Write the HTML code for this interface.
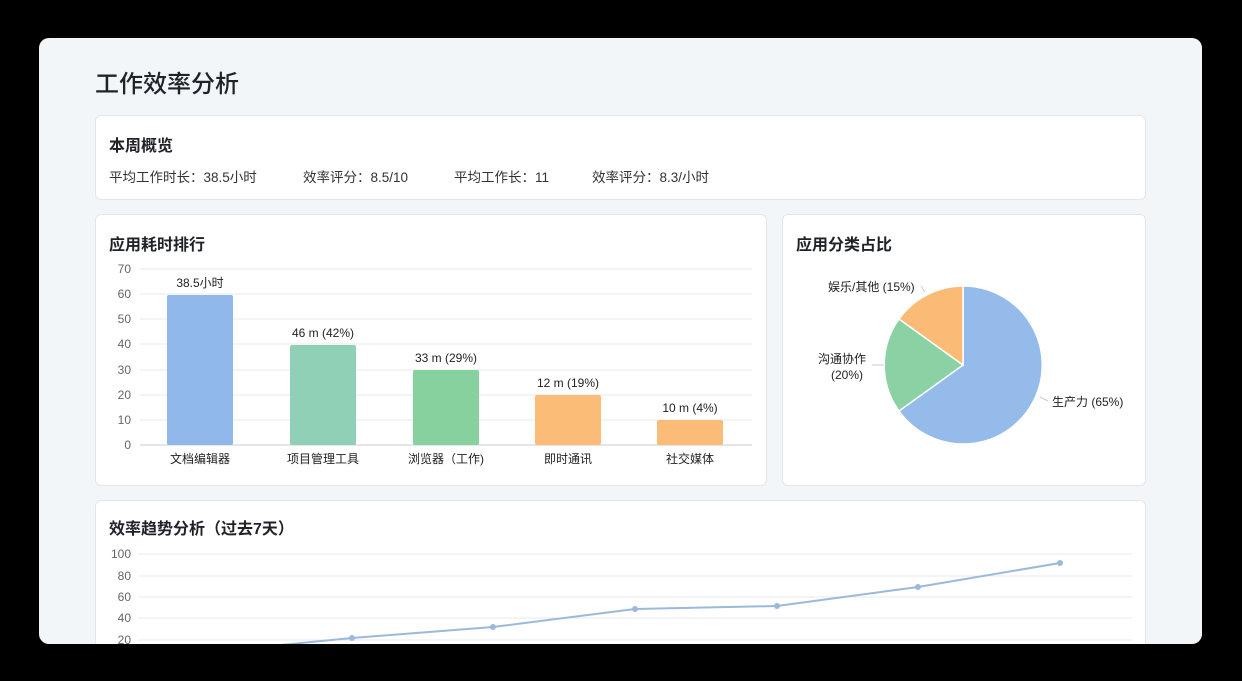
<!DOCTYPE html>
<html><head><meta charset="utf-8"><style>
body{margin:0;width:1242px;height:681px;background:#000;overflow:hidden;font-family:"Liberation Sans","Noto Sans CJK SC",sans-serif;color:#222}
.panel{position:absolute;left:39px;top:38px;width:1163px;height:606px;background:#f3f6f8;border-radius:10px;overflow:hidden}
.card{position:absolute;background:#fff;border:1px solid #e3e7eb;border-radius:6px;box-sizing:border-box}
h1{position:absolute;left:56px;top:26px;margin:0;font-size:24px;font-weight:500;color:#1f2328}
.t{position:absolute;font-size:16px;font-weight:600;color:#1f2328}
.s{position:absolute;font-size:13.5px;top:50px;color:#333}
</style></head><body>
<div class="panel">
<h1>工作效率分析</h1>
<div class="card" style="left:56px;top:77px;width:1051px;height:85px">
<div class="t" style="left:13px;top:16px">本周概览</div>
<div class="s" style="left:13px">平均工作时长：38.5小时</div>
<div class="s" style="left:207px">效率评分：8.5/10</div>
<div class="s" style="left:358px">平均工作长：11</div>
<div class="s" style="left:496px">效率评分：8.3/小时</div>
</div>
<div class="card" style="left:56px;top:176px;width:672px;height:272px"><div class="t" style="left:13px;top:16px">应用耗时排行</div></div>
<div class="card" style="left:743px;top:176px;width:364px;height:272px"><div class="t" style="left:13px;top:16px">应用分类占比</div></div>
<div class="card" style="left:56px;top:462px;width:1051px;height:200px"><div class="t" style="left:13px;top:14px">效率趋势分析（过去7天）</div></div>
</div>
<svg width="1242" height="681" style="position:absolute;left:0;top:0" font-family="Liberation Sans,Noto Sans CJK SC,sans-serif">
<g stroke="#e6e8eb" stroke-width="1">
<line x1="140" x2="752" y1="269" y2="269"/><line x1="140" x2="752" y1="294" y2="294"/><line x1="140" x2="752" y1="319" y2="319"/><line x1="140" x2="752" y1="344" y2="344"/><line x1="140" x2="752" y1="370" y2="370"/><line x1="140" x2="752" y1="395" y2="395"/><line x1="140" x2="752" y1="420" y2="420"/>
</g>
<line x1="140" x2="752" y1="445" y2="445" stroke="#ccc"/>
<g font-size="12" fill="#666" text-anchor="end">
<text x="131" y="273">70</text><text x="131" y="298">60</text><text x="131" y="323">50</text><text x="131" y="348">40</text><text x="131" y="374">30</text><text x="131" y="399">20</text><text x="131" y="424">10</text><text x="131" y="449">0</text></g>
<rect x="167" y="295" width="66" height="150" fill="#91b8ea" rx="2"/>
<rect x="290" y="345" width="66" height="100" fill="#8fd0b6" rx="2"/>
<rect x="413" y="370" width="66" height="75" fill="#86d19e" rx="2"/>
<rect x="535" y="395" width="66" height="50" fill="#fbbc78" rx="2"/>
<rect x="657" y="420" width="66" height="25" fill="#fbbc78" rx="2"/>
<g font-size="12" fill="#222" text-anchor="middle">
<text x="200" y="287">38.5小时</text><text x="323" y="337">46 m (42%)</text><text x="446" y="362">33 m (29%)</text><text x="568" y="387">12 m (19%)</text><text x="690" y="412">10 m (4%)</text>
<text x="200" y="463">文档编辑器</text><text x="323" y="463">项目管理工具</text><text x="446" y="463">浏览器（工作)</text><text x="568" y="463">即时通讯</text><text x="690" y="463">社交媒体</text></g>
<g stroke="#fff" stroke-width="1.5">
<path d="M963,365 L963,286 A79,79 0 1 1 899,411 Z" fill="#94bbea"/>
<path d="M963,365 L899,411 A79,79 0 0 1 899,319 Z" fill="#8ad1a4"/>
<path d="M963,365 L899,319 A79,79 0 0 1 963,286 Z" fill="#fbbb77"/></g>
<g stroke="#ccc" fill="none"><path d="M921,286 l4,6"/><path d="M872,365 h12"/><path d="M1040,397 l8,4"/></g>
<g font-size="12" fill="#222">
<text x="828" y="291">娱乐/其他 (15%)</text><text x="818" y="363">沟通协作</text><text x="831" y="379">(20%)</text><text x="1052" y="406">生产力 (65%)</text></g>
<g stroke="#e6e8eb"><line x1="138" x2="1132" y1="554" y2="554"/><line x1="138" x2="1132" y1="576" y2="576"/><line x1="138" x2="1132" y1="597" y2="597"/><line x1="138" x2="1132" y1="618" y2="618"/><line x1="138" x2="1132" y1="640" y2="640"/></g>
<g font-size="12" fill="#666" text-anchor="end"><text x="131" y="558">100</text><text x="131" y="580">80</text><text x="131" y="601">60</text><text x="131" y="622">40</text><text x="131" y="644">20</text></g>
<polyline points="210,652 352,638 493,627 635,609 777,606 918,587 1060,563" fill="none" stroke="#9bb8dd" stroke-width="2"/>
<g fill="#9bb8dd"><circle cx="352" cy="638" r="3"/><circle cx="493" cy="627" r="3"/><circle cx="635" cy="609" r="3"/><circle cx="777" cy="606" r="3"/><circle cx="918" cy="587" r="3"/><circle cx="1060" cy="563" r="3"/></g>
<rect x="0" y="644" width="1242" height="37" fill="#000"/>
</svg>
</body></html>
